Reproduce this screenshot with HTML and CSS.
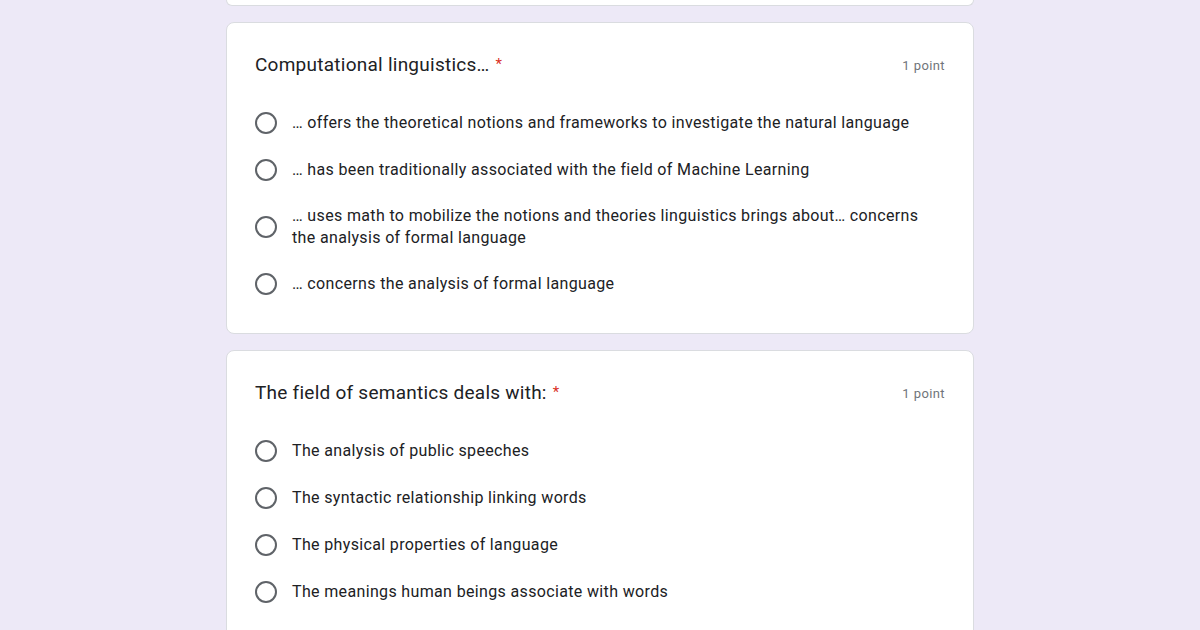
FILE: index.html
```html
<!DOCTYPE html>
<html>
<head>
<meta charset="utf-8">
<link rel="stylesheet" href="styles.css">
</head>
<body>
<div class="form">
  <div class="card stub"></div>

  <div class="card">
    <div class="head">
      <div class="title">Computational linguistics… <span class="req">*</span></div>
      <div class="points">1 point</div>
    </div>
    <div class="options">
      <label class="opt"><span class="radio"></span><span class="text">… offers the theoretical notions and frameworks to investigate the natural language</span></label>
      <label class="opt"><span class="radio"></span><span class="text">… has been traditionally associated with the field of Machine Learning</span></label>
      <label class="opt"><span class="radio"></span><span class="text">… uses math to mobilize the notions and theories linguistics brings about… concerns<br>the analysis of formal language</span></label>
      <label class="opt"><span class="radio"></span><span class="text">… concerns the analysis of formal language</span></label>
    </div>
  </div>

  <div class="card">
    <div class="head">
      <div class="title">The field of semantics deals with: <span class="req">*</span></div>
      <div class="points">1 point</div>
    </div>
    <div class="options">
      <label class="opt"><span class="radio"></span><span class="text">The analysis of public speeches</span></label>
      <label class="opt"><span class="radio"></span><span class="text">The syntactic relationship linking words</span></label>
      <label class="opt"><span class="radio"></span><span class="text">The physical properties of language</span></label>
      <label class="opt"><span class="radio"></span><span class="text">The meanings human beings associate with words</span></label>
    </div>
  </div>
</div>
</body>
</html>
```

FILE: styles.css
```css
html, body {
  margin: 0;
  padding: 0;
  background: #ede9f7;
  height: 100%;
  overflow: hidden;
}
body {
  font-family: Roboto, "Liberation Sans", sans-serif;
  color: #202124;
}
.form {
  width: 748px;
  margin: 0 auto;
  display: flex;
  flex-direction: column;
  gap: 16px;
}
.card {
  background: #fff;
  border: 1px solid #dadce0;
  border-radius: 8px;
  padding: 29px 28px 37px 28px;
}
.card.stub {
  height: 5px;
  padding: 0;
  border-top: none;
  border-radius: 0 0 8px 8px;
}
.head {
  display: flex;
  justify-content: space-between;
  align-items: center;
  height: 24px;
}
.title {
  font-size: 19px;
  line-height: 24px;
  letter-spacing: 0.25px;
}
.req {
  color: #d93025;
  font-size: 15px;
  margin-left: 1px;
  vertical-align: 2px;
}
.points {
  font-size: 13px;
  letter-spacing: 0.4px;
  color: #70757a;
  margin-top: 3px;
}
.options {
  display: flex;
  flex-direction: column;
  gap: 23px;
  margin-top: 35px;
}
.opt {
  display: flex;
  align-items: center;
  gap: 15px;
  min-height: 24px;
}
.radio {
  flex: none;
  box-sizing: border-box;
  width: 22px;
  height: 22px;
  border: 2px solid #5f6368;
  border-radius: 50%;
}
.text {
  font-size: 16px;
  line-height: 22px;
  letter-spacing: 0.35px;
}
```
